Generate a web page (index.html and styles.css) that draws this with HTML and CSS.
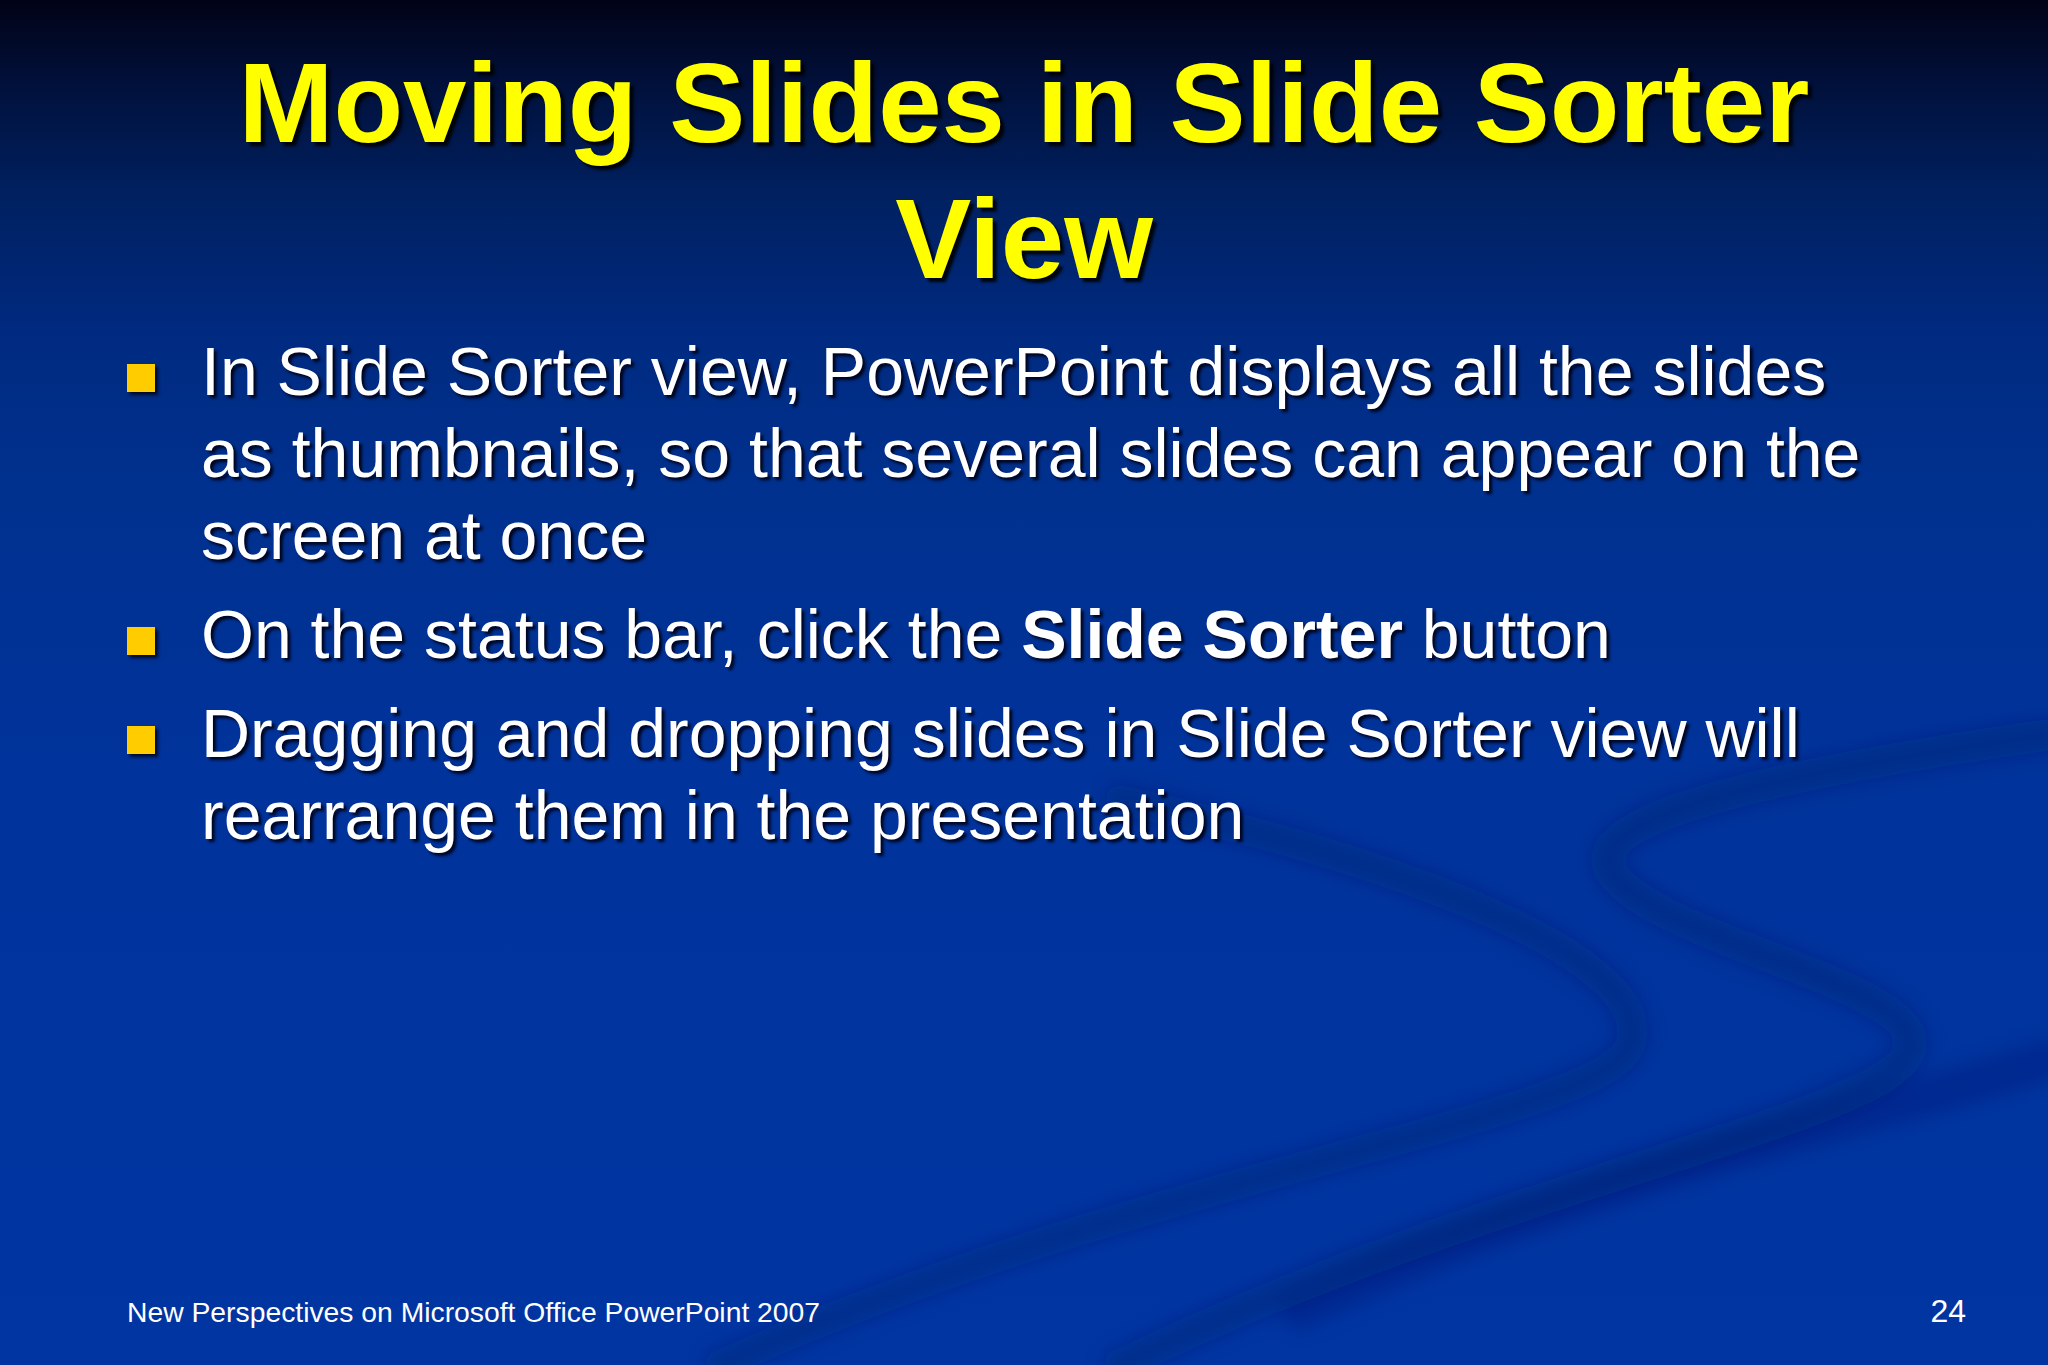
FILE: index.html
```html
<!DOCTYPE html>
<html lang="en">
<head>
    <meta charset="UTF-8">
    <meta name="viewport" content="width=device-width, initial-scale=1.0">
    <title>Moving Slides in Slide Sorter View</title>
    <link rel="stylesheet" href="styles.css">
</head>
<body>
    <div class="slide">
        <!-- background swooshes of the theme -->
        <svg class="swoosh" width="2048" height="1365" viewBox="0 0 2048 1365">
            <defs>
                <filter id="soft" x="-10%" y="-10%" width="120%" height="120%">
                    <feGaussianBlur stdDeviation="9"/>
                </filter>
            </defs>
            <g fill="none" stroke="#001660" stroke-linecap="round" filter="url(#soft)">
                <path d="M1120 800 C1400 860, 1660 960, 1630 1045 C1600 1120, 1150 1170, 720 1365" stroke-width="30" opacity="0.3"/>
                <path d="M2048 735 C1800 770, 1580 815, 1610 870 C1650 940, 1930 985, 1910 1050 C1885 1120, 1500 1180, 1120 1365" stroke-width="32" opacity="0.3"/>
                <path d="M2048 1060 C1900 1110, 1600 1170, 1300 1310" stroke-width="40" opacity="0.22"/>
            </g>
        </svg>

        <h1 class="title">Moving Slides in Slide Sorter<br>View</h1>

        <ul class="points">
            <li class="point">
                <span class="marker"></span>
                <span class="point-text">In Slide Sorter view, PowerPoint displays all the slides as thumbnails, so that several slides can appear on the screen at once</span>
            </li>
            <li class="point">
                <span class="marker"></span>
                <span class="point-text">On the status bar, click the <b>Slide Sorter</b> button</span>
            </li>
            <li class="point">
                <span class="marker"></span>
                <span class="point-text">Dragging and dropping slides in Slide Sorter view will rearrange them in the presentation</span>
            </li>
        </ul>

        <div class="footer">
            <span class="footer-text">New Perspectives on Microsoft Office PowerPoint 2007</span>
            <span class="slide-number">24</span>
        </div>
    </div>
</body>
</html>
```

FILE: styles.css
```css
body {
    margin: 0;
    background-color: #0035a2;
    font-family: "Liberation Sans", Arial, sans-serif;
}

.slide {
    position: relative;
    width: 2048px;
    height: 1365px;
    overflow: hidden;
    display: flex;
    flex-direction: column;
    background: linear-gradient(to bottom,
        #020216 0%,
        #01103a 6%,
        #00205f 14%,
        #002a80 24%,
        #00318f 36%,
        #00339b 55%,
        #0035a2 100%);
}

.swoosh {
    position: absolute;
    top: 0;
    left: 0;
}

.title {
    position: relative;
    margin: 35px 0 0;
    font-size: 114px;
    line-height: 136px;
    font-weight: bold;
    text-align: center;
    color: #ffff00;
    text-shadow: 4px 4px 3px rgba(0, 0, 0, 0.9);
}

.points {
    position: relative;
    list-style: none;
    margin: 23px 0 0;
    padding: 0 140px 0 127px;
    flex: 1;
}

.point {
    display: flex;
    gap: 46px;
    font-size: 68px;
    line-height: 82px;
    color: #ffffff;
    text-shadow: 3px 3px 3px rgba(0, 0, 20, 0.9);
}

.point + .point {
    margin-top: 17px;
}

.marker {
    flex: none;
    width: 28px;
    height: 28px;
    margin-top: 34px;
    background-color: #ffcc00;
    box-shadow: 3px 3px 3px rgba(0, 0, 20, 0.8);
}

.point-text b {
    font-weight: bold;
}

.footer {
    position: relative;
    display: flex;
    justify-content: space-between;
    align-items: baseline;
    padding: 0 82px 33px 127px;
    line-height: 40px;
    color: #ffffff;
}

.footer-text {
    font-size: 28.3px;
}

.slide-number {
    font-size: 32px;
}
```
